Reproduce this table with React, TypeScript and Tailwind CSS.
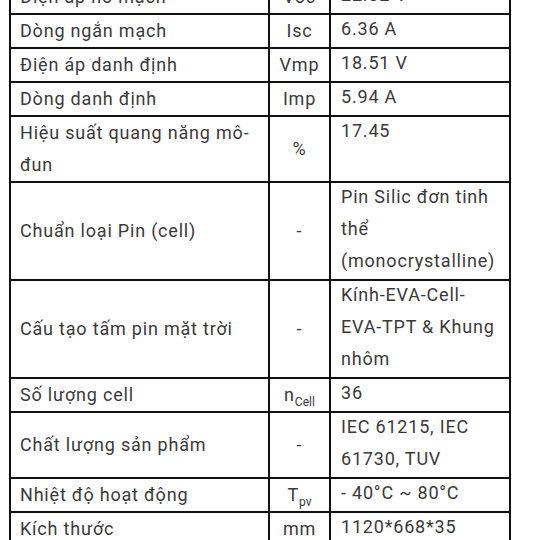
import React from 'react';

interface SpecRow {
  name: string;
  symbol: React.ReactNode;
  value: React.ReactNode;
}

const rows: SpecRow[] = [
  { name: 'Điện áp hở mạch', symbol: 'Voc', value: '22.32 V' },
  { name: 'Dòng ngắn mạch', symbol: 'Isc', value: '6.36 A' },
  { name: 'Điện áp danh định', symbol: 'Vmp', value: '18.51 V' },
  { name: 'Dòng danh định', symbol: 'Imp', value: '5.94 A' },
  { name: 'Hiệu suất quang năng mô-đun', symbol: '%', value: '17.45' },
  { name: 'Chuẩn loại Pin (cell)', symbol: '-', value: 'Pin Silic đơn tinh thể (monocrystalline)' },
  { name: 'Cấu tạo tấm pin mặt trời', symbol: '-', value: 'Kính-EVA-Cell-EVA-TPT & Khung nhôm' },
  {
    name: 'Số lượng cell',
    symbol: (
      <>
        n<span className="inline-block text-[12px] leading-none tracking-normal translate-y-[5px]">Cell</span>
      </>
    ),
    value: '36',
  },
  { name: 'Chất lượng sản phẩm', symbol: '-', value: 'IEC 61215, IEC 61730, TUV' },
  {
    name: 'Nhiệt độ hoạt động',
    symbol: (
      <>
        T<span className="inline-block text-[12px] leading-none tracking-normal translate-y-[5px]">pv</span>
      </>
    ),
    value: '- 40°C ~ 80°C',
  },
  { name: 'Kích thước', symbol: 'mm', value: '1120*668*35' },
];

const App: React.FC = () => {
  return (
    <div className="w-[540px] h-[540px] overflow-hidden bg-white">
      <table
        className="-mt-[21px] ml-[9px] w-[500px] border-collapse text-[18px] tracking-[0.8px] leading-[32px] text-[#3a3a3a] table-fixed"
        style={{ fontFamily: 'Roboto, "Noto Sans", sans-serif' }}
      >
        <colgroup>
          <col className="w-[259px]" />
          <col className="w-[61px]" />
          <col className="w-[180px]" />
        </colgroup>
        <tbody>
          {rows.map((row, i) => (
            <tr key={i}>
              <td className="border-2 border-[#111] px-[9px] align-middle">{row.name}</td>
              <td className="border-2 border-[#111] px-0 text-center align-middle">{row.symbol}</td>
              <td className="border-2 border-[#111] pl-[10px] pr-[10px] align-top">
                <div className="-mt-[2px] mb-[2px]">{row.value}</div>
              </td>
            </tr>
          ))}
        </tbody>
      </table>
    </div>
  );
};

export default App;
